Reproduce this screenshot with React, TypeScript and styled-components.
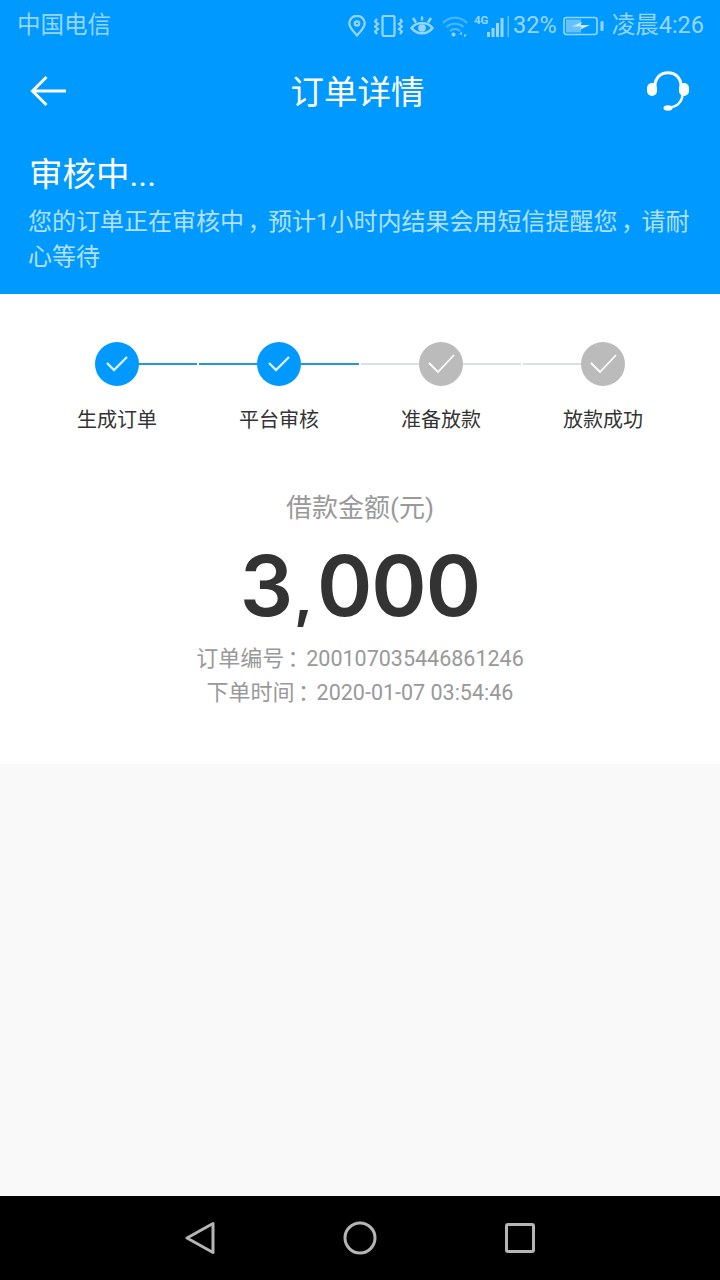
import styled, { createGlobalStyle } from "styled-components";

const GlobalStyle = createGlobalStyle`
  html, body {
    margin: 0;
    padding: 0;
    background: #f9f9f9;
  }
  * {
    box-sizing: border-box;
  }
`;

const Page = styled.div`
  width: 720px;
  height: 1280px;
  display: flex;
  flex-direction: column;
  overflow: hidden;
  font-family: Roboto, "Noto Sans CJK SC", sans-serif;
`;

const BlueHeader = styled.header`
  height: 294px;
  flex: none;
  background: #0099ff;
  display: flex;
  flex-direction: column;
`;

const StatusBar = styled.div`
  height: 50px;
  padding: 1px 16px 0 17px;
  display: flex;
  align-items: center;
  justify-content: space-between;
  color: #99d6ff;
  font-size: 23.5px;
`;

const StatusRight = styled.div`
  display: flex;
  align-items: center;
`;

const StatusItem = styled.span<{ $left?: number }>`
  display: block;
  margin-left: ${(p) => p.$left ?? 0}px;
  line-height: 49px;
`;

const NavBar = styled.div`
  height: 82px;
  padding: 0 31px 0 30px;
  display: flex;
  align-items: center;
  justify-content: space-between;
  color: #fff;
`;

const NavTitle = styled.h1`
  margin: 0 0 3px;
  font-size: 33.5px;
  font-weight: 400;
`;

const NoticeBox = styled.div`
  padding: 21px 28px 0;
  color: #fff;
`;

const NoticeTitle = styled.div`
  font-size: 33.5px;
  line-height: 44px;
  margin-left: 1px;
`;

const NoticeText = styled.div`
  margin-top: 8px;
  font-size: 24px;
  line-height: 35px;
  color: #b3e0ff;
`;

/* the comma and colon sit further into their cell in the reference */
const Mark = styled.span`
  padding-left: 0.15em;
  letter-spacing: -0.15em;
`;

const OrderCard = styled.section`
  height: 470px;
  flex: none;
  background: #fff;
  padding-top: 48px;
  display: flex;
  flex-direction: column;
  align-items: center;
`;

const Steps = styled.div`
  width: 648px;
  display: grid;
  grid-template-columns: repeat(4, 1fr);
`;

const Step = styled.div`
  display: flex;
  flex-direction: column;
  align-items: center;
`;

const StepTrack = styled.div`
  width: 160px;
  display: flex;
  align-items: center;
`;

const StepLine = styled.div<{ $on: boolean; $hidden?: boolean }>`
  flex: 1;
  height: 2px;
  background: ${(p) =>
    p.$hidden ? "transparent" : p.$on ? "#2398d2" : "#d8e2e6"};
`;

const StepDot = styled.div<{ $on: boolean }>`
  width: 44px;
  height: 44px;
  flex: none;
  border-radius: 50%;
  background: ${(p) => (p.$on ? "#0099ff" : "#bbbbbb")};
  display: flex;
  align-items: center;
  justify-content: center;
`;

const StepLabel = styled.div`
  margin-top: 20px;
  font-size: 20px;
  line-height: 28px;
  color: #333;
`;

const AmountLabel = styled.div`
  margin-top: 56px;
  font-size: 26px;
  line-height: 36px;
  color: #999;
`;

const Amount = styled.div`
  margin-top: 8px;
  font-family: Inter, Roboto, sans-serif;
  font-size: 84px;
  font-weight: 600;
  line-height: 104px;
  letter-spacing: -1px;
  color: #333;
`;

const AmountComma = styled.span`
  font-size: 56px;
  font-weight: 700;
  line-height: 0;
  margin: 0 5px 0 2px;
`;

const MetaLine = styled.div`
  font-size: 21.5px;
  line-height: 34px;
  color: #999;
`;

const MetaFirst = styled(MetaLine)`
  margin-top: 4px;
`;

const MetaKey = styled.span`
  font-size: 22px;
  line-height: 0;
`;

const Blank = styled.div`
  flex: 1;
  background: #f9f9f9;
`;

const SystemNav = styled.nav`
  height: 84px;
  flex: none;
  background: #000;
  display: flex;
  align-items: center;
  justify-content: center;
  gap: 128px;
  padding-bottom: 1px;
`;

const steps = [
  { label: "生成订单", on: true },
  { label: "平台审核", on: true },
  { label: "准备放款", on: false },
  { label: "放款成功", on: false },
];

const SoftIcon = styled.svg`
  display: block;
  flex: none;
`;

const PinIcon = () => (
  <SoftIcon width="18" height="22" viewBox="0 0 18 22" fill="none" stroke="#99d6ff" strokeWidth="2.2">
    <path d="M9 20.5C5 16 1.300 12.500 1.300 8.500a7.700 7.700 0 0 1 15.400 0C16.700 12.500 13 16 9 20.500z" />
    <circle cx="9" cy="8.500" r="2.200" />
  </SoftIcon>
);

const VibrateIcon = () => (
  <SoftIcon width="29" height="22" viewBox="0 0 29 22" fill="none" stroke="#99d6ff" strokeWidth="2.2">
    <rect x="8.500" y="1" width="12" height="20" rx="1.500" />
    <path d="M3 4 1 6.500 4 9 1 11.500 4 14 1 16.500 3 19" />
    <path d="M26 4l2 2.500L25 9l3 2.500L25 14l3 2.500L26 19" />
  </SoftIcon>
);

const EyeIcon = () => (
  <SoftIcon width="24" height="20" viewBox="0 0 24 20" fill="none" stroke="#99d6ff" strokeWidth="2.4">
    <path d="M1.500 12c5-6.500 16-6.500 21 0-5 7-16 7-21 0z" />
    <circle cx="12" cy="12" r="3.800" fill="#99d6ff" stroke="none" />
    <path d="M3 2l3 4.500M12 .5v4M21 2l-3 4.500" />
  </SoftIcon>
);

const WifiIcon = () => (
  <SoftIcon width="26" height="22" viewBox="0 0 26 22" fill="none" stroke="#4db8ff" strokeWidth="2">
    <path d="M1 8c6.500-7 17.500-7 24 0" />
    <path d="M4.500 12c4.500-4.500 12.500-4.500 17 0" />
    <path d="M8 16c2.500-2.600 7.500-2.600 10 0" />
    <circle cx="11.500" cy="19.500" r="2" fill="#99d6ff" stroke="none" />
    <path d="M20 16.500 17 19.500h3M22 22.500l3-3h-3" fill="#99d6ff" stroke="none" />
  </SoftIcon>
);

const SignalIcon = () => (
  <SoftIcon width="36" height="24" viewBox="0 0 36 24" fill="#99d6ff">
    <text x="0" y="10" fontFamily="Roboto, sans-serif" fontSize="11.500" fontWeight="700">
      4G
    </text>
    <rect x="13" y="18" width="3" height="5" />
    <rect x="17.500" y="14" width="3" height="9" />
    <rect x="22" y="9" width="3" height="14" />
    <rect x="26.500" y="4" width="3" height="19" />
    <rect x="33.500" y="2" width="1.500" height="21" fill="#66c2ff" />
  </SoftIcon>
);

const BatteryIcon = () => (
  <SoftIcon width="41" height="20" viewBox="0 0 41 20" fill="none">
    <rect x="1" y="1.500" width="33" height="17" rx="2.500" stroke="#99d6ff" strokeWidth="1.600" />
    <rect x="3" y="3.500" width="15" height="13" fill="#66c2ff" />
    <path d="M9 10.500 19 6l-1.500 3H27l-10 4.800 1.500-3.300z" fill="#cfeaff" />
    <rect x="37.500" y="5" width="3" height="10" rx="1.200" fill="#99d6ff" />
  </SoftIcon>
);

const BackIcon = () => (
  <SoftIcon width="38" height="32" viewBox="0 0 38 32" fill="none" stroke="#fff" strokeWidth="3">
    <path d="M36 16H3" />
    <path d="M16.500 2 2.500 16l14 14" />
  </SoftIcon>
);

const HeadsetIcon = () => (
  <SoftIcon width="42" height="40" viewBox="0 0 42 40" fill="none">
    <path d="M8 15C8 7 13.500 1.800 21 1.800S34 7 34 15" stroke="#fff" strokeWidth="3" />
    <path d="M35.500 24C35 31 30 35.500 22 37" stroke="#fff" strokeWidth="2.400" />
    <rect x="0" y="12" width="10" height="13" rx="5" fill="#fff" />
    <rect x="32" y="12" width="10" height="13" rx="5" fill="#fff" />
    <ellipse cx="21" cy="37" rx="4.500" ry="2.800" fill="#fff" />
  </SoftIcon>
);

const CheckIcon = ({ on }: { on: boolean }) =>
  on ? (
    <SoftIcon width="24" height="18" viewBox="0 0 24 18" fill="none" stroke="#d9f0ff" strokeWidth="2.4">
      <path d="M2 8l7 7L22 2" />
    </SoftIcon>
  ) : (
    <SoftIcon width="28" height="22" viewBox="0 0 28 22" fill="none" stroke="#fff" strokeWidth="1.800">
      <path d="M2 10l9 9L27 2" />
    </SoftIcon>
  );

const BackKey = () => (
  <SoftIcon width="30" height="34" viewBox="0 0 30 34" fill="none" stroke="#b5b5b5" strokeWidth="3" strokeLinejoin="round">
    <path d="M28 2.500V31.500L2 17z" />
  </SoftIcon>
);

const HomeKey = () => (
  <SoftIcon width="34" height="34" viewBox="0 0 34 34" fill="none" stroke="#b5b5b5" strokeWidth="3">
    <circle cx="17" cy="17" r="15" />
  </SoftIcon>
);

const RecentKey = () => (
  <SoftIcon width="30" height="30" viewBox="0 0 30 30" fill="none" stroke="#b5b5b5" strokeWidth="3" strokeLinejoin="round">
    <rect x="1.500" y="1.500" width="27" height="27" rx="1.500" />
  </SoftIcon>
);

export default function App() {
  return (
    <Page>
      <GlobalStyle />
      <BlueHeader>
        <StatusBar>
          <StatusItem>中国电信</StatusItem>
          <StatusRight>
            <PinIcon />
            <StatusItem $left={8}>
              <VibrateIcon />
            </StatusItem>
            <StatusItem $left={7}>
              <EyeIcon />
            </StatusItem>
            <StatusItem $left={8}>
              <WifiIcon />
            </StatusItem>
            <StatusItem $left={6}>
              <SignalIcon />
            </StatusItem>
            <StatusItem $left={3}>32%</StatusItem>
            <StatusItem $left={6}>
              <BatteryIcon />
            </StatusItem>
            <StatusItem $left={8}>凌晨4:26</StatusItem>
          </StatusRight>
        </StatusBar>
        <NavBar>
          <BackIcon />
          <NavTitle>订单详情</NavTitle>
          <HeadsetIcon />
        </NavBar>
        <NoticeBox>
          <NoticeTitle>审核中...</NoticeTitle>
          <NoticeText>
            您的订单正在审核中<Mark>，</Mark>预计1小时内结果会用短信提醒您<Mark>，</Mark>请耐
            <br />
            心等待
          </NoticeText>
        </NoticeBox>
      </BlueHeader>

      <OrderCard>
        <Steps>
          {steps.map((s, i) => (
            <Step key={s.label}>
              <StepTrack>
                <StepLine $on={s.on} $hidden={i === 0} />
                <StepDot $on={s.on}>
                  <CheckIcon on={s.on} />
                </StepDot>
                <StepLine $on={s.on} $hidden={i === steps.length - 1} />
              </StepTrack>
              <StepLabel>{s.label}</StepLabel>
            </Step>
          ))}
        </Steps>
        <AmountLabel>借款金额(元)</AmountLabel>
        <Amount>
          3<AmountComma>,</AmountComma>000
        </Amount>
        <MetaFirst>
          <MetaKey>
            订单编号<Mark>：</Mark>
          </MetaKey>
          200107035446861246
        </MetaFirst>
        <MetaLine>
          <MetaKey>
            下单时间<Mark>：</Mark>
          </MetaKey>
          2020-01-07 03:54:46
        </MetaLine>
      </OrderCard>

      <Blank />

      <SystemNav>
        <BackKey />
        <HomeKey />
        <RecentKey />
      </SystemNav>
    </Page>
  );
}
